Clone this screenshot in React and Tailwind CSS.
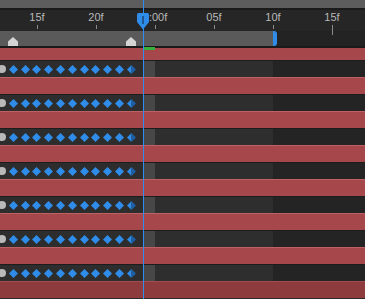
import React from 'react';

const labels = [
  { x: 37, t: '15f' },
  { x: 96, t: '20f' },
  { x: 155, t: '0:00f' },
  { x: 214, t: '05f' },
  { x: 273, t: '10f' },
  { x: 332, t: '15f' },
];

function Diamond({ half }) {
  return (
    <svg width="9" height="9" viewBox="0 0 9 9">
      {half ? (
        <>
          <polygon points="4.5,0 4.5,9 0,4.5" fill="#2f8ce8" />
          <polygon points="4.5,0 9,4.5 4.5,9" fill="#1d5fa6" />
        </>
      ) : (
        <polygon points="4.5,0 9,4.5 4.5,9 0,4.5" fill="#2f8ce8" />
      )}
    </svg>
  );
}

function KeyRow() {
  const keys = Array.from({ length: 11 });
  return (
    <div className="flex h-[17px] border-t border-[#1c1c1c]">
      <div className="w-[143px] bg-[#2d2d2d] flex items-center relative">
        <div className="absolute left-[-2px] top-[4px] w-[8px] h-[8px] rounded-full bg-[#b9b9b9]" />
        <div className="flex items-center pl-[7.4px]">
          {keys.map((_, i) => (
            <div key={i} className="w-[11.8px] flex justify-center">
              <Diamond half={i === 10} />
            </div>
          ))}
        </div>
      </div>
      <div className="w-[12px] bg-[#474747]" />
      <div className="w-[118px] bg-[#2e2e2e]" />
      <div className="flex-1 bg-[#242424]" />
    </div>
  );
}

function RedRow({ dark }) {
  return (
    <div
      className={`h-[17px] border-t ${dark ? 'bg-[#8e3b3e] border-[#9f4d50]' : 'bg-[#a6474b] border-[#bd6165]'}`}
    />
  );
}

export default function App() {
  const rows = Array.from({ length: 7 });
  return (
    <div className="w-[365px] h-[299px] relative overflow-hidden bg-[#2a2a2a] font-['Liberation_Sans',Arial,sans-serif]">
      <div className="h-[8px] bg-[#5d5d5d]" />
      <div className="h-[2px] bg-[#1b1b1b]" />
      {/* ruler */}
      <div className="relative h-[21px] bg-[#262626]">
        {labels.map((l, i) => (
          <React.Fragment key={i}>
            <div
              className="absolute top-[1px] w-[40px] -ml-[20px] text-center text-[11px] leading-[13px] text-[#b8b8b8]"
              style={{ left: l.x }}
            >
              {l.t}
            </div>
            <div
              className={`absolute top-[15px] w-px bg-[#8a8a8a] ${l.x > 280 ? 'h-[10px]' : 'h-[4px]'}`}
              style={{ left: l.x }}
            />
          </React.Fragment>
        ))}
      </div>
      {/* work area */}
      <div className="flex h-[15px] bg-[#232323]">
        <div className="relative w-[273px] bg-[#5a5a5a]">
          {[13, 131].map((x) => (
            <svg key={x} className="absolute top-[6px]" style={{ left: x - 5 }} width="10" height="9" viewBox="0 0 10 9">
              <polygon points="5,0 10,4.5 10,9 0,9 0,4.5" fill="#d4d4d4" />
            </svg>
          ))}
        </div>
        <div className="w-[4px] h-[15px] bg-[#2f8ce8] rounded-r-[3px]" />
      </div>
      <div className="relative h-[2px] bg-[#1a1a1a]">
        <div className="absolute left-[144px] top-[1px] w-[11px] h-[3px] bg-[#36b03a] z-10" />
      </div>
      {/* layers */}
      <div className="h-[12px] bg-[#a6474b]" />
      {rows.map((_, i) => (
        <React.Fragment key={i}>
          <KeyRow />
          <RedRow dark={i === 6} />
        </React.Fragment>
      ))}
      <div className="h-[2px] bg-[#2a2a2a]" />
      {/* playhead */}
      <div className="absolute left-[143px] top-0 bottom-0 w-px bg-[#2f8cf0] z-20" />
      <svg className="absolute left-[137px] top-[13px] z-30" width="12" height="17" viewBox="0 0 12 17">
        <path d="M1.5 0 H10.5 Q12 0 12 1.5 V9 L6 16.5 L0 9 V1.5 Q0 0 1.5 0 Z" fill="#2f8ce8" />
        <rect x="5.5" y="3" width="1" height="8" fill="#10243a" />
      </svg>
    </div>
  );
}
